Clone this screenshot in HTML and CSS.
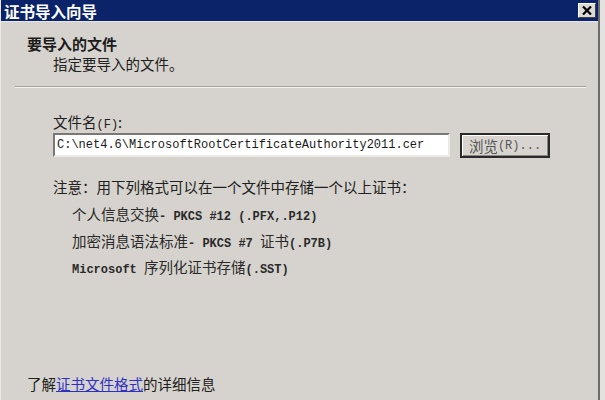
FILE: index.html
```html
<!DOCTYPE html>
<html lang="zh-CN">
<head>
<meta charset="utf-8">
<title>证书导入向导</title>
<link rel="stylesheet" href="styles.css">
</head>
<body>
<div class="window">
  <div class="titlebar">
    <span class="title">证书导入向导</span>
    <span class="close">
      <svg width="10" height="9" viewBox="0 0 10 9"><path d="M1 0.5 L9 8.5 M9 0.5 L1 8.5" stroke="#000" stroke-width="2.2"/></svg>
    </span>
  </div>
  <div class="header">
    <div class="h-title">要导入的文件</div>
    <div class="h-sub">指定要导入的文件。</div>
  </div>
  <div class="sep"></div>
  <div class="content">
    <div class="label">文件名<span class="m thin">(F)</span>:</div>
    <div class="row">
      <div class="input"><span class="m thin">C:\net4.6\MicrosoftRootCertificateAuthority2011.cer</span></div>
      <div class="btn">浏览<span class="m thin">(R)...</span></div>
    </div>
    <div class="note">注意：用下列格式可以在一个文件中存储一个以上证书：</div>
    <ul class="list">
      <li>个人信息交换<span class="m">- PKCS #12 (.PFX,.P12)</span></li>
      <li>加密消息语法标准<span class="m">- PKCS #7 </span>证书<span class="m">(.P7B)</span></li>
      <li><span class="m">Microsoft </span>序列化证书存储<span class="m">(.SST)</span></li>
    </ul>
  </div>
  <div class="footer">了解<a class="link" href="#">证书文件格式</a>的详细信息</div>
</div>
</body>
</html>
```
FILE: styles.css
```css
html, body {
  margin: 0;
  padding: 0;
}
body {
  width: 605px;
  height: 400px;
  overflow: hidden;
  background: #e4e2de;
  font-family: "Noto Sans CJK SC", "DejaVu Sans", sans-serif;
  font-size: 14.5px;
  color: #202020;
}
.window {
  width: 597px;
  height: 400px;
  background: #d6d3ce;
  border-left: 1px solid #ece9e4;
  border-right: 2px solid #6d6d6d;
  display: flex;
  flex-direction: column;
}
.titlebar {
  height: 21px;
  background: #0b2469;
  border-bottom: 1px solid #e8e6e2;
  display: flex;
  align-items: center;
  justify-content: space-between;
  padding: 0 2px 0 3px;
}
.title {
  color: #fff;
  font-weight: bold;
  font-size: 15.5px;
  line-height: 18px;
}
.close {
  width: 16px;
  height: 13px;
  background: #dcdad6;
  border-top: 1px solid #fff;
  border-left: 1px solid #fff;
  border-right: 1px solid #404040;
  border-bottom: 1px solid #404040;
  display: flex;
  align-items: center;
  justify-content: center;
}
.header {
  padding: 13px 0 0 26px;
}
.h-title {
  font-weight: bold;
  font-size: 15px;
  height: 18px;
  line-height: 18px;
  color: #1c1c1c;
}
.h-sub {
  margin-top: 2px;
  padding-left: 26px;
  height: 18px;
  line-height: 18px;
}
.sep {
  margin: 13px 12px 0 14px;
  border-top: 1px solid #a3a09b;
  border-bottom: 1px solid #f4f3f1;
}
.content {
  padding: 25px 0 0 52px;
}
.m {
  font-family: "Liberation Mono", monospace;
  font-size: 12px;
  font-weight: bold;
  line-height: 1;
}
.m.thin {
  font-weight: normal;
}
.label {
  height: 18px;
  line-height: 18px;
}
.row {
  margin-top: 2px;
  display: flex;
  gap: 10px;
  align-items: flex-start;
}
.input {
  width: 391px;
  height: 20px;
  background: #fff;
  border-top: 2px solid #7a7874;
  border-left: 2px solid #7a7874;
  border-right: 2px solid #eceae6;
  border-bottom: 2px solid #eceae6;
  display: flex;
  align-items: center;
  padding-left: 2px;
  color: #1a1a1a;
  overflow: hidden;
  white-space: nowrap;
}
.btn {
  width: 86px;
  height: 21px;
  border: 2px solid #2a2a2a;
  background: #d8d5d0;
  box-shadow: inset 1px 1px 0 #fff, inset -1px -1px 0 #8a8782;
  display: flex;
  align-items: center;
  justify-content: center;
  color: #555;
}
.note {
  margin-top: 20px;
  height: 18px;
  line-height: 18px;
}
.list {
  list-style: none;
  margin: 5px 0 0 0;
  padding: 0 0 0 19px;
}
.list li {
  height: 26.5px;
  line-height: 26.5px;
  color: #2a2a2a;
}
.footer {
  margin-top: auto;
  padding: 0 0 7px 26px;
  height: 18px;
  line-height: 18px;
}
.link {
  color: #2f2fc4;
  text-decoration: underline;
}
```
